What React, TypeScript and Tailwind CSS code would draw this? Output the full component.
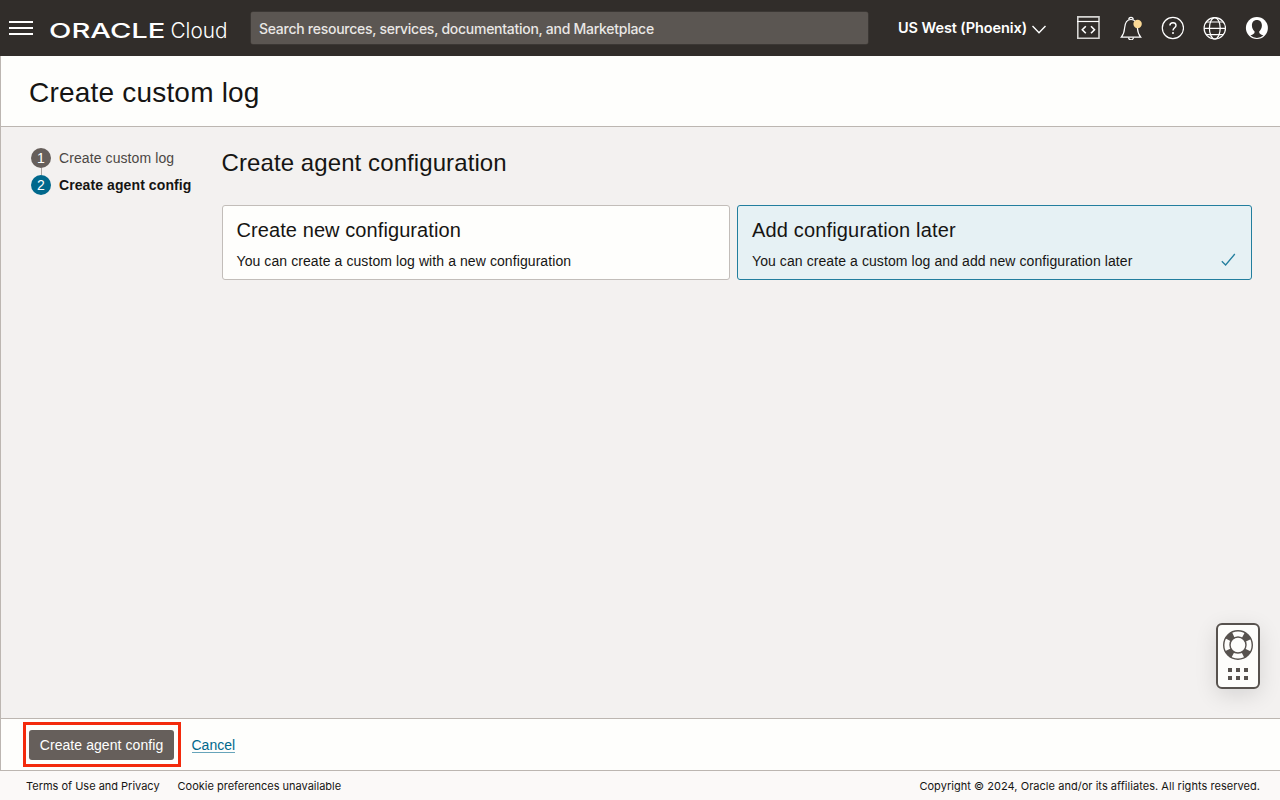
import type { ReactNode } from "react";

function OracleLogo() {
  return (
    <svg width="182" height="26" viewBox="0 0 182 26" className="mt-[2px] ml-[16px] shrink-0" fill="#fff" aria-label="Oracle Cloud">
      <text x="0" y="22" fontFamily="Inter, sans-serif" fontWeight="500" fontSize="20.600" textLength="116.500" lengthAdjust="spacingAndGlyphs">
        ORACLE
      </text>
      <text x="121.500" y="22" fontFamily="Inter, sans-serif" fontWeight="300" fontSize="21.500" textLength="57" lengthAdjust="spacingAndGlyphs">
        Cloud
      </text>
    </svg>
  );
}

function HeaderIcon({ children }: { children: ReactNode }) {
  return (
    <svg width="24" height="24" viewBox="0 0 24 24" fill="none" stroke="#fff" strokeWidth="1.2">
      {children}
    </svg>
  );
}

function Header() {
  return (
    <header className="flex h-14 shrink-0 items-center bg-[#312d2a] text-white">
      <div className="ml-[9px] flex w-6 flex-col gap-[4px]">
        <div className="h-[2px] bg-white" />
        <div className="h-[2px] bg-white" />
        <div className="h-[2px] bg-white" />
      </div>
      <OracleLogo />
      <div className="ml-[20px] flex h-8 w-[617px] items-center rounded-[2px] bg-[#5b5652] px-2 shadow-[0_0_0_0.5px_#47423e]">
        <span className="pt-[1px] font-[Inter,sans-serif] text-[14px] font-medium tracking-[-0.27px] whitespace-nowrap text-[#e9e7e5]">
          Search resources, services, documentation, and Marketplace
        </span>
      </div>
      <div className="ml-[30px] flex w-[149px] items-center gap-[5px]">
        <span className="font-[Inter,sans-serif] text-[14.5px] font-semibold tracking-[-0.1px] whitespace-nowrap">US West (Phoenix)</span>
        <svg width="14" height="9" viewBox="0 0 14 9" fill="none" stroke="#fff" strokeWidth="1.4" className="mt-[2px] shrink-0">
          <path d="M0.5 1 7 7.7 13.5 1" />
        </svg>
      </div>
      <div className="ml-[29px] flex gap-[18px]">
        <HeaderIcon>
          <g stroke="#d5d4d2" strokeWidth="1.6">
            <path d="M1.800 .9h21.200v21.400H1.800z" />
            <path d="M1 5.500h22" stroke="#fff" strokeWidth="1.200" />
            <path d="m9.800 10.300-3.500 3.500 3.500 3.500M15 10.300l3.500 3.500-3.500 3.500" stroke="#fff" />
          </g>
        </HeaderIcon>
        <HeaderIcon>
          <g transform="translate(.8 0)">
            <path d="M2.500 21.200h19.400c-2.200-2.600-3-5-3.300-9.200C18.200 6.300 16.500 3.500 12.200 3.500S6.200 6.300 5.800 12c-.3 4.200-1.100 6.600-3.300 9.200Z" />
            <path d="M10 3.500a2.200 2.200 0 0 1 4.400 0M9.800 21.500a2.400 2.400 0 0 0 4.800 0" />
            <circle cx="18.800" cy="8" r="4.200" fill="#fbd995" stroke="none" />
          </g>
        </HeaderIcon>
        <HeaderIcon>
          <circle cx="12.900" cy="12" r="10.600" />
          <path d="M9.900 9.600C9.900 7.600 11.100 6.700 13 6.700s3 1 3 2.700c0 2.300-3 2.400-3 5.100" strokeWidth="1.400" />
          <circle cx="13" cy="17" r="1" fill="#fff" stroke="none" />
        </HeaderIcon>
        <HeaderIcon>
          <circle cx="12.800" cy="12.300" r="10.700" />
          <ellipse cx="12.800" cy="12.300" rx="5.400" ry="10.700" />
          <path d="M2 12.300h21.600M4 6h17.600M4 18.600h17.600" />
        </HeaderIcon>
        <HeaderIcon>
          <g transform="translate(.9 0)" stroke="none">
            <circle cx="12" cy="12" r="11" fill="#fff" />
            <path d="M12 3.900c3.100 0 5 2.200 5 5.300 0 2.600-1.100 5-2.700 6.200 0 1.700.3 2.500 4.200 4.200a10 10 0 0 1-13 0c3.900-1.700 4.200-2.500 4.200-4.200C8.100 14.200 7 11.800 7 9.200c0-3.100 1.900-5.300 5-5.300Z" fill="#312d2a" />
          </g>
        </HeaderIcon>
      </div>
    </header>
  );
}

function Steps() {
  return (
    <ol className="flex w-[190.5px] shrink-0 flex-col pt-[21px] text-[14px] leading-5 tracking-[0.09px] whitespace-nowrap">
      <li className="flex gap-2 text-[#4b4744]">
        <div className="flex flex-col items-center">
          <span className="flex size-5 items-center justify-center rounded-full bg-[#665f5b] text-white">1</span>
          <span className="h-[7px] w-px bg-[#a8a29d]" />
        </div>
        Create custom log
      </li>
      <li className="flex gap-2 font-bold text-[#161513]">
        <span className="flex size-5 items-center justify-center rounded-full bg-[#00688c] font-normal text-white">2</span>
        Create agent config
      </li>
    </ol>
  );
}

function SupportWidget() {
  return (
    <div className="absolute right-[20px] bottom-[29px] flex h-[66px] w-[44px] flex-col items-center rounded-[6px] border-2 border-[#57524e] bg-[#fdfdfb] pt-[4px] shadow-[0_6px_22px_rgba(0,0,0,0.12)]">
      <svg width="32" height="32" viewBox="0 0 32 32" fill="none" stroke="#57524e">
        <circle cx="16" cy="16" r="11" strokeWidth="7" strokeDasharray="7 10.279" strokeDashoffset="-5.140" />
        <circle cx="16" cy="16" r="14.300" strokeWidth="1.400" />
        <circle cx="16" cy="16" r="8" strokeWidth="1.400" />
      </svg>
      <div className="mt-[7px] grid grid-cols-3 gap-[4px]">
        {[0, 1, 2, 3, 4, 5].map((dot) => (
          <span key={dot} className="size-1 bg-[#57524e]" />
        ))}
      </div>
    </div>
  );
}

export default function App() {
  return (
    <div className="flex h-[800px] w-[1280px] flex-col overflow-hidden bg-[#fbf9f8] font-['Liberation_Sans',Arial,sans-serif] text-[#161513]">
      <Header />
      <div className="flex min-h-0 flex-1 flex-col border-l border-[#bcb6b1]">
        <div className="flex h-[71px] shrink-0 items-center border-b border-[#bcb6b1] bg-[#fefefc] pl-7">
          <h1 className="pt-[3px] text-[28px] leading-8 tracking-[0.2px]">Create custom log</h1>
        </div>
        <main className="relative flex min-h-0 flex-1 bg-[#f3f1f0] pr-7 pl-[30px]">
          <Steps />
          <section className="flex-1 pt-[21px]">
            <h2 className="text-[24px] leading-[30px] tracking-[0.09px]">Create agent configuration</h2>
            <div className="mt-[27px] flex gap-[7px] tracking-[0.085px]">
              <div className="h-[75px] w-[508.5px] rounded-[3px] border border-[#c2bdb9] bg-[#fefefc] px-[14px] pt-[11px]">
                <h3 className="text-[20px] leading-[26px]">Create new configuration</h3>
                <p className="mt-[8px] text-[14px] leading-5">You can create a custom log with a new configuration</p>
              </div>
              <div className="flex h-[75px] flex-1 justify-between rounded-[3px] border border-[#227e9e] bg-[#e6f1f4] px-[14px] pt-[11px]">
                <div>
                  <h3 className="text-[20px] leading-[26px] tracking-[0.16px]">Add configuration later</h3>
                  <p className="mt-[8px] text-[14px] leading-5">You can create a custom log and add new configuration later</p>
                </div>
                <svg width="16" height="14" viewBox="0 0 16 14" fill="none" stroke="#227e9e" strokeWidth="1.3" className="mt-[36px]">
                  <path d="M.8 8.300 4.600 12 13.800 1" />
                </svg>
              </div>
            </div>
          </section>
          <SupportWidget />
        </main>
        <div className="flex h-[53px] shrink-0 items-center border-y border-[#bcb6b1] bg-[#fefefc] pl-[22px]">
          <div className="flex h-[45px] w-[158px] items-center border-[3px] border-[#f32a0c] pl-[3px]">
            <button className="h-[30px] w-[145px] rounded-[3px] bg-[#665f5b] pt-px text-[14px] tracking-[0.07px] whitespace-nowrap text-white">Create agent config</button>
          </div>
          <a className="mt-px ml-[10.5px] border-b border-[#66a4ba] text-[14px] leading-[14px] text-[#00688c]">Cancel</a>
        </div>
      </div>
      <footer className="flex h-[29px] shrink-0 items-center pt-px pr-5 pl-[26px] font-[Inter,sans-serif] text-[11px] tracking-[-0.01px] whitespace-nowrap">
        <span>Terms of Use and Privacy</span>
        <span className="ml-[18px] tracking-[-0.01px]">Cookie preferences unavailable</span>
        <span className="ml-auto tracking-[0.04px]">Copyright © 2024, Oracle and/or its affiliates. All rights reserved.</span>
      </footer>
    </div>
  );
}
